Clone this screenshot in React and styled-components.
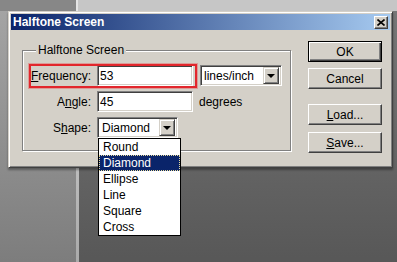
import styled, { createGlobalStyle } from "styled-components";

const GlobalStyle = createGlobalStyle`
html, body {
  margin: 0;
  padding: 0;
}
body {
  font-family: "Liberation Sans", Arial, sans-serif;
  font-size: 12px;
  color: #000;
}
`

const Desktop = styled.div`
width: 397px;
height: 262px;
overflow: hidden;
box-sizing: border-box;
padding: 11px 4px 0 8px;
background:
  linear-gradient(to right, #878787 0 76px, #e4e4e4 76px 78px, #c6c6c6 78px) top / 100% 11px no-repeat,
  linear-gradient(to bottom, rgba(255,255,255,0.06), rgba(0,0,0,0.22)),
  linear-gradient(to right, #a0a0a0 0 76px, #dadada 76px 79px, #707070 79px);
`

const Dialog = styled.div`
position: relative;
width: 385px;
height: 157px;
box-sizing: border-box;
background: #d4d0c8;
border: 1px solid;
border-color: #d4d0c8 #404040 #404040 #d4d0c8;
box-shadow: inset 1px 1px #fff, inset -1px -1px #808080, 0 2px 2px rgba(0,0,0,0.35);
padding: 2px;
display: flex;
flex-direction: column;
`

const TitleBar = styled.div`
height: 16px;
display: flex;
align-items: center;
justify-content: space-between;
padding: 0 2px;
background: linear-gradient(to right, #0a246a, #a6caf0);
color: #fff;
font-weight: bold;
font-size: 12px;
`

const CloseButton = styled.div`
width: 14px;
height: 13px;
box-sizing: border-box;
display: flex;
align-items: center;
justify-content: center;
background: #d4d0c8;
border: 1px solid;
border-color: #fff #404040 #404040 #fff;
box-shadow: inset -1px -1px #808080;
`

const Body = styled.div`
flex: 1;
display: flex;
gap: 17px;
padding: 11px 8px 0 11px;
`

const Group = styled.fieldset`
margin: 2px 0 0;
padding: 0;
width: 269px;
height: 108px;
box-sizing: border-box;
border: 1px solid #808080;
box-shadow: inset 1px 1px #fff, 1px 1px #fff;
`

const Legend = styled.legend`
margin-left: 13px;
padding: 0 2px;
line-height: 15px;
font-size: 12px;
background: #d4d0c8;
`

const Rows = styled.div`
display: flex;
flex-direction: column;
gap: 5px;
padding: 7px 0 0 8px;
`

const Row = styled.div`
display: flex;
align-items: center;
height: 21px;
`

const Highlight = styled.div`
position: relative;
display: flex;
align-items: center;

&::after {
  content: "";
  position: absolute;
  top: -1px;
  bottom: -2px;
  left: -2px;
  right: -4px;
  border: 2px solid #e2262c;
  box-shadow: 0 0 0 1px rgba(230, 90, 90, 0.45);
  pointer-events: none;
}
`

const Label = styled.label`
width: 60px;
margin-right: 6px;
text-align: right;
white-space: nowrap;
`

const Sunken = styled.div`
position: relative;
width: ${p => p.$width}px;
height: 21px;
box-sizing: border-box;
margin-left: ${p => p.$gap || 0}px;
display: flex;
align-items: center;
background: #fff;
border: 1px solid;
border-color: #808080 #fff #fff #808080;
box-shadow: inset 1px 1px #404040, inset -1px -1px #d4d0c8;
padding: 2px;
`

const Value = styled.span`
flex: 1;
padding-left: ${p => p.$pad || 0}px;
white-space: nowrap;
`

const ArrowButton = styled.div`
width: 16px;
height: 17px;
box-sizing: border-box;
display: flex;
align-items: center;
justify-content: center;
background: #d4d0c8;
border: 1px solid;
border-color: #d4d0c8 #404040 #404040 #d4d0c8;
box-shadow: inset 1px 1px #fff, inset -1px -1px #808080;

&::before {
  content: "";
  border-left: 4px solid transparent;
  border-right: 4px solid transparent;
  border-top: 4px solid #000;
}
`

const Unit = styled.span`
margin-left: 6px;
`

const List = styled.ul`
position: absolute;
top: calc(100% + 1px);
left: 0;
width: 83px;
margin: 0;
padding: 0;
list-style: none;
background: #fff;
border: 1px solid #000;
box-sizing: border-box;
z-index: 2;
`

const Item = styled.li`
height: 16px;
line-height: 16px;
padding-left: 4px;
background: ${p => (p.$active ? "#0a246a" : "transparent")};
color: ${p => (p.$active ? "#fff" : "#000")};
outline: ${p => (p.$active ? "1px dotted #e8dc9c" : "none")};
outline-offset: -1px;
`

const Buttons = styled.div`
display: flex;
flex-direction: column;
`

const Button = styled.button`
width: 74px;
height: 21px;
margin-top: ${p => p.$top || 0}px;
padding: 0;
font: inherit;
font-size: 12px;
color: #000;
background: #d4d0c8;
border: 1px solid;
border-color: ${p => (p.$default ? "#000" : "#fff #404040 #404040 #fff")};
box-shadow: ${p =>
  p.$default
    ? "inset 1px 1px #fff, inset -1px -1px #404040, inset -2px -2px #808080"
    : "inset -1px -1px #808080"};
`

const shapes = ["Round", "Diamond", "Ellipse", "Line", "Square", "Cross"];

export default function App() {
  return (
    <Desktop>
      <GlobalStyle />
      <Dialog>
        <TitleBar>
          <span>Halftone Screen</span>
          <CloseButton>
            <svg width="8" height="7" viewBox="0 0 8 7">
              <path d="M0.5 0.5 L7.5 6.5 M7.5 0.5 L0.5 6.5" stroke="#000" strokeWidth="1.6" fill="none" />
            </svg>
          </CloseButton>
        </TitleBar>
        <Body>
          <Group>
            <Legend>Halftone Screen</Legend>
            <Rows>
              <Row>
                <Highlight>
                  <Label><u>F</u>requency:</Label>
                  <Sunken $width={96}><Value $pad={0}>53</Value></Sunken>
                </Highlight>
                <Sunken $width={82} $gap={7}>
                  <Value $pad={1}>lines/inch</Value>
                  <ArrowButton />
                </Sunken>
              </Row>
              <Row>
                <Label>A<u>n</u>gle:</Label>
                <Sunken $width={96}><Value>45</Value></Sunken>
                <Unit>degrees</Unit>
              </Row>
              <Row>
                <Label>S<u>h</u>ape:</Label>
                <Sunken $width={81}>
                  <Value $pad={2}>Diamond</Value>
                  <ArrowButton />
                  <List>
                    {shapes.map(s => (
                      <Item key={s} $active={s === "Diamond"}>{s}</Item>
                    ))}
                  </List>
                </Sunken>
              </Row>
            </Rows>
          </Group>
          <Buttons>
            <Button $default>OK</Button>
            <Button $top={6}>Cancel</Button>
            <Button $top={15}><u>L</u>oad...</Button>
            <Button $top={7}><u>S</u>ave...</Button>
          </Buttons>
        </Body>
      </Dialog>
    </Desktop>
  )
}
